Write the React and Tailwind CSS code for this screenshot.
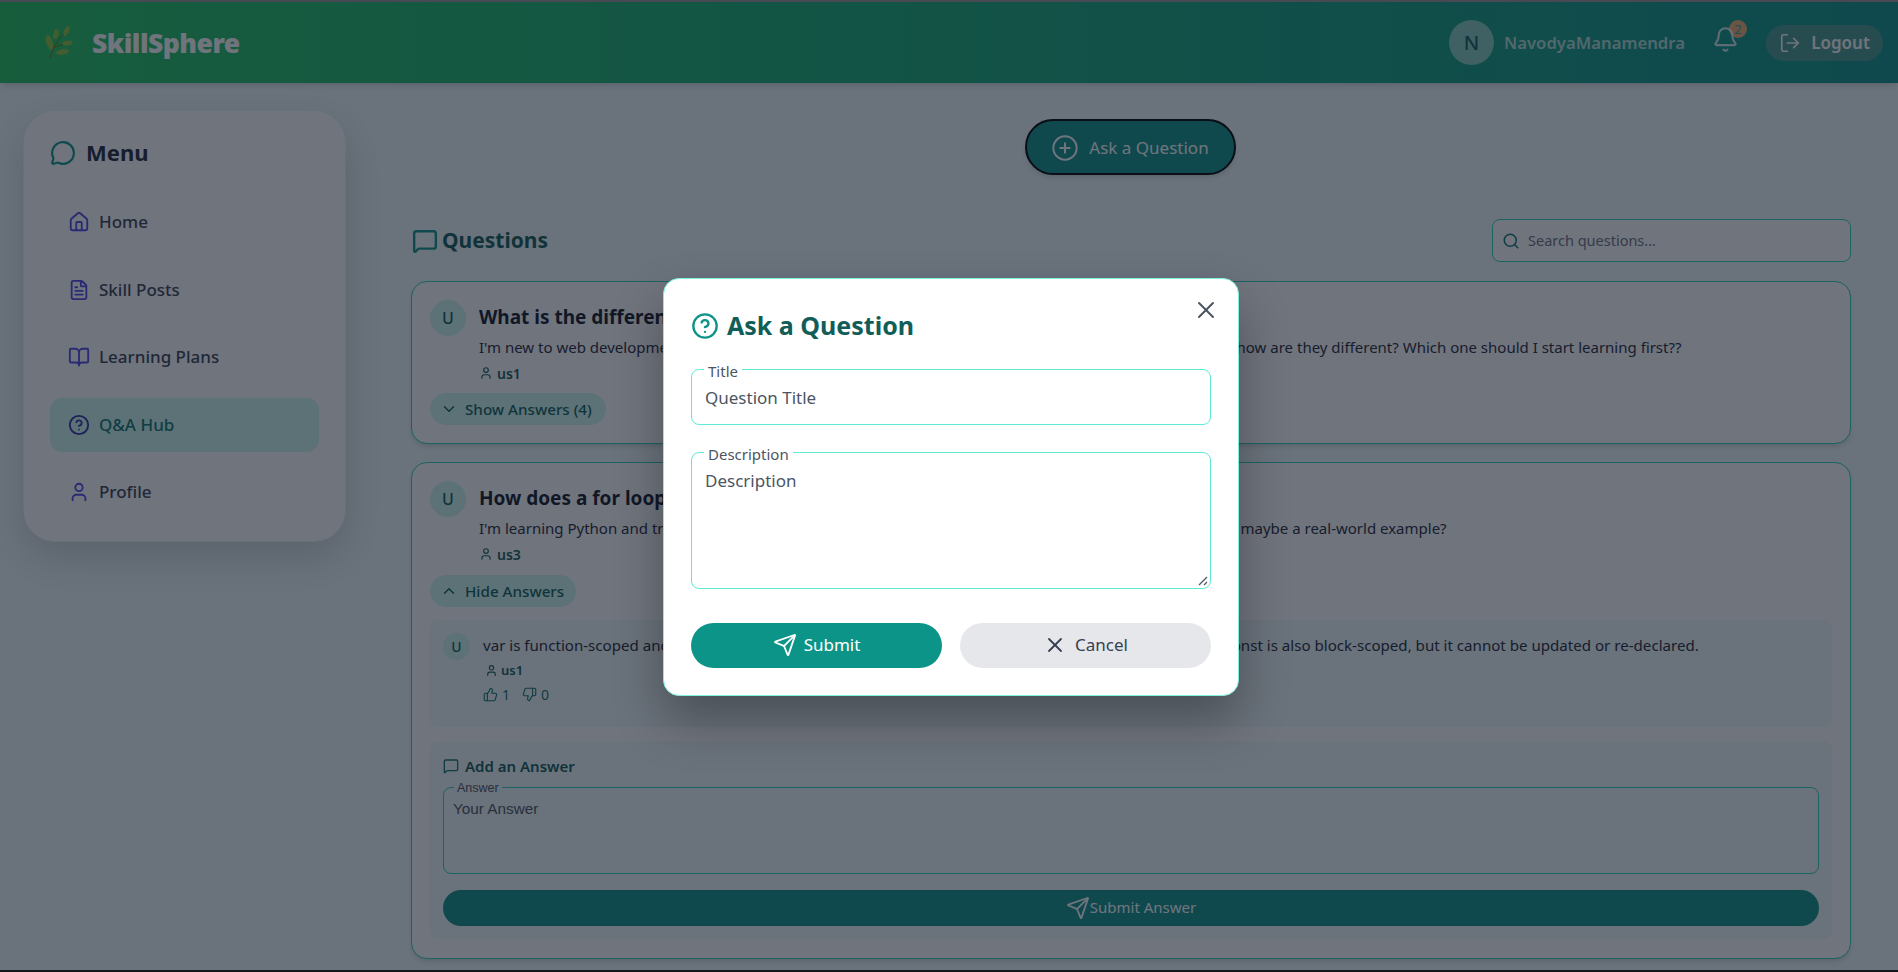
import React from 'react';
import {
  Bell, BookOpen, ChevronDown, ChevronUp, CircleHelp, CirclePlus, FileText, House, LogOut,
  MessageCircle, MessageSquare, Search, Send, ThumbsDown, ThumbsUp, User, X,
} from 'lucide-react';

const menuItems = [
  { label: 'Home', icon: House },
  { label: 'Skill Posts', icon: FileText },
  { label: 'Learning Plans', icon: BookOpen },
  { label: 'Q&A Hub', icon: CircleHelp, active: true },
  { label: 'Profile', icon: User },
];

const LeafLogo = () => (
  <svg width="28" height="33" viewBox="0 0 28 33" fill="none">
    <path d="M5 32 C7 24 12 14 22 4" stroke="#7c6f00" strokeWidth="1" />
    <path d="M9 21 C15 20 20 18 22 14" stroke="#7c6f00" strokeWidth="0.8" />
    <ellipse cx="4.5" cy="16.5" rx="3.2" ry="7.5" transform="rotate(-18 4.5 16.5)" fill="#8cc63f" />
    <ellipse cx="11" cy="8" rx="2.6" ry="5" transform="rotate(12 11 8)" fill="#8cc63f" />
    <ellipse cx="21.5" cy="5" rx="2.4" ry="5.4" transform="rotate(24 21.5 5)" fill="#8cc63f" />
    <ellipse cx="22.5" cy="17" rx="5.2" ry="2.4" transform="rotate(-8 22.5 17)" fill="#8cc63f" />
    <ellipse cx="17.5" cy="26" rx="6.5" ry="2.8" transform="rotate(-10 17.5 26)" fill="#8cc63f" />
  </svg>
);

const Header = () => (
  <header className="flex h-[81px] shrink-0 items-center justify-between bg-gradient-to-r from-[#22c55e] to-[#0d9488] pl-[45px] pr-[15px] shadow-md">
    <div className="flex items-center gap-[19px]">
      <LeafLogo />
      <span className="pt-[2px] text-[26.5px] font-black tracking-[-0.5px] text-white">SkillSphere</span>
    </div>
    <div className="flex items-center">
      <div className="flex h-[45px] w-[45px] items-center justify-center rounded-full bg-white/50 text-[20px] font-medium text-[#115e59]">N</div>
      <span className="ml-[10px] text-[16.7px] font-semibold text-white/70">NavodyaManamendra</span>
      <div className="relative mb-[6px] ml-[27px] mr-[27px]">
        <span className="absolute -right-[8px] -top-[6px] flex h-[18px] w-[18px] items-center justify-center rounded-full bg-[#f0b173] text-[13px] leading-none text-[#4f9aa0]">2</span>
        <Bell size={27} strokeWidth={1.8} className="relative text-white/80" />
      </div>
      <button className="flex h-[36px] w-[117px] items-center justify-center gap-[10px] rounded-full bg-[#4a9c90] text-[17px] font-semibold text-white">
        <LogOut size={22} strokeWidth={1.8} />
        Logout
      </button>
    </div>
  </header>
);

const Sidebar = () => (
  <aside className="h-[432px] w-[323px] shrink-0 rounded-[32px] border border-[#e6f7f5] bg-white px-[26px] pt-[25px] shadow-[0_16px_40px_rgba(0,0,0,0.16)]">
    <div className="flex items-center gap-[10px]">
      <MessageCircle size={26} strokeWidth={2} className="text-[#0d9488]" />
      <span className="text-[22px] font-bold text-[#1f2937]">Menu</span>
    </div>
    <nav className="mt-[26px] flex flex-col gap-[13.5px]">
      {menuItems.map((item) => {
        const Icon = item.icon;
        return (
          <div
            key={item.label}
            className={`flex h-[54px] items-center gap-[9px] rounded-xl pl-[18px] text-[17px] font-medium ${item.active ? 'bg-[#ccfbf1] text-[#0f766e]' : 'text-[#374151]'}`}
          >
            <Icon size={22} strokeWidth={2} className={item.active ? 'text-[#3730a3]' : 'text-[#4f46e5]'} />
            {item.label}
          </div>
        );
      })}
    </nav>
  </aside>
);

const Avatar = ({ small }) => (
  <div className={`flex shrink-0 items-center justify-center rounded-full bg-[#ccfbf1] font-medium text-[#115e59] ${small ? 'h-[27px] w-[27px] text-[14px]' : 'h-[36px] w-[36px] text-[16px]'}`}>U</div>
);

const Author = ({ name, small }) => (
  <div className={`flex items-center font-semibold text-[#115e59] ${small ? 'gap-[3px] text-[13px]' : 'gap-[4px] text-[14px]'}`}>
    <User size={small ? 13 : 14} strokeWidth={2} />
    {name}
  </div>
);

const Pill = ({ width, icon: Icon, children }) => (
  <div className={`flex h-[32px] items-center gap-[7px] rounded-full bg-[#ccfbf1] pl-[10px] text-[15.2px] font-medium text-[#115e59] ${width}`}>
    <Icon size={18} strokeWidth={2} />
    {children}
  </div>
);

const QuestionHead = ({ title, body, author }) => (
  <div className="flex gap-[13px]">
    <Avatar />
    <div className="min-w-0 flex-1">
      <div className="flex h-[35px] items-center text-[19px] font-bold text-[#111827]">{title}</div>
      <div className="h-[24px] whitespace-nowrap text-[15px] leading-[24px] text-[#1f2937]">{body}</div>
      <div className="mt-[4px] flex h-[20px] items-center"><Author name={author} /></div>
    </div>
  </div>
);

const Main = () => (
  <main className="min-w-0 flex-1">
    <div className="flex justify-center pr-[2px] pt-[9px]">
      <button className="flex h-[56px] w-[211px] items-center justify-center gap-[10px] rounded-full border-2 border-black bg-[#0d9488] pt-[1px] text-[17px] text-white shadow-md">
        <CirclePlus size={28} strokeWidth={1.7} />
        Ask a Question
      </button>
    </div>
    <div className="mt-[44px] flex items-center justify-between">
      <div className="flex items-center gap-[4px] pl-[1px] text-[21px] font-bold text-[#115e59]">
        <MessageSquare size={26} strokeWidth={2.2} className="text-[#0d9488]" />
        Questions
      </div>
      <div className="flex h-[43px] w-[359px] items-center gap-[8px] rounded-lg border border-[#2dd4bf] bg-white pl-[9px] text-[14.5px] text-[#6b7280]">
        <Search size={18} strokeWidth={2} className="text-[#0f766e]" />
        Search questions...
      </div>
    </div>
    <div className="mt-[19px] flex flex-col gap-[18px]">
      <section className="h-[163px] rounded-2xl border border-[#2dd4bf] bg-white px-[18px] pt-[18px] shadow-md">
        <QuestionHead
          title="What is the difference between React, Angular, and Vue?"
          body="I'm new to web development and keep hearing about React, Angular, and Vue.js. What exactly are they, and how are they different? Which one should I start learning first??"
          author="us1"
        />
        <div className="mt-[10px]"><Pill width="w-[176px]" icon={ChevronDown}>Show Answers (4)</Pill></div>
      </section>
      <section className="h-[497px] rounded-2xl border border-[#2dd4bf] bg-white px-[18px] pt-[18px] shadow-md">
        <QuestionHead
          title="How does a for loop work in Python?"
          body="I'm learning Python and trying to understand how a for loop works. Can someone explain it with syntax and maybe a real-world example?"
          author="us3"
        />
        <div className="mt-[11px]"><Pill width="w-[146px]" icon={ChevronUp}>Hide Answers</Pill></div>
        <div className="mt-[13px] flex h-[107px] gap-[13px] rounded-lg bg-[#f0f9f9] pl-[13px] pt-[13px]">
          <Avatar small />
          <div>
            <div className="whitespace-nowrap text-[15.1px] leading-[24px] text-[#1f2937]">var is function-scoped and can be re-declared and updated, let is block-scoped and can only be updated, const is also block-scoped, but it cannot be updated or re-declared.</div>
            <div className="mt-[4px] pl-[2px]"><Author name="us1" small /></div>
            <div className="mt-[3px] flex items-center gap-[12px] text-[14px] text-[#0f766e]">
              <span className="flex items-center gap-[4px]"><ThumbsUp size={15} strokeWidth={1.8} />1</span>
              <span className="flex items-center gap-[4px]"><ThumbsDown size={15} strokeWidth={1.8} />0</span>
            </div>
          </div>
        </div>
        <div className="mt-[15px] h-[197px] rounded-lg bg-[#f0f9f9] px-[13px] pt-[13px]">
          <div className="flex items-center gap-[6px] text-[15px] font-semibold text-[#115e59]">
            <MessageSquare size={16} strokeWidth={2} className="text-[#0f766e]" />
            Add an Answer
          </div>
          <div className="relative mt-[9px] h-[87px] rounded-lg border border-[#2dd4bf] px-[9px] pt-[10px] text-[15.3px] font-['Liberation_Sans',sans-serif] text-[#4b5563]">
            <span className="absolute -top-[8px] left-[10px] bg-[#f0f9f9] px-[3px] text-[12.5px] leading-[16px]">Answer</span>
            Your Answer
          </div>
          <button className="mt-[16px] flex h-[36px] w-full items-center justify-center rounded-full bg-[#0d9488] text-[15px] text-white">
            <Send size={24} strokeWidth={1.8} />
            Submit Answer
          </button>
        </div>
      </section>
    </div>
  </main>
);

const Field = ({ label, placeholder, area }) => (
  <div className={`relative rounded-lg border border-[#5eead4] px-[13px] text-[17px] text-[#4b5563] ${area ? 'h-[137px] pt-[15px]' : 'flex h-[56px] items-center pt-[2px]'}`}>
    <span className="absolute -top-[9px] left-[12px] bg-white px-[4px] text-[15px] leading-[20px]">{label}</span>
    {placeholder}
    {area && (
      <svg className="absolute bottom-[2px] right-[2px]" width="10" height="10" viewBox="0 0 10 10" stroke="#4b5563" strokeWidth="1.2">
        <path d="M1 9 L9 1 M6 9 L9 6" />
      </svg>
    )}
  </div>
);

const AskModal = () => (
  <div className="absolute inset-0 z-10 flex items-center justify-center bg-[#111827]/60 pl-[4px] pt-[2px]">
    <div className="relative h-[418px] w-[576px] rounded-2xl border-[1.5px] border-[#7ef0dc] bg-white px-[27px] pt-[28px] shadow-[0_25px_50px_rgba(0,0,0,0.3)]">
      <button className="absolute right-[18px] top-[17px] text-[#4b5563]"><X size={28} strokeWidth={1.7} /></button>
      <div className="flex items-center gap-[8px] text-[25px] font-bold text-[#115e59]">
        <CircleHelp size={28} strokeWidth={2} className="text-[#0d9488]" />
        Ask a Question
      </div>
      <div className="mt-[24px] flex flex-col gap-[27px]">
        <Field label="Title" placeholder="Question Title" />
        <Field label="Description" placeholder="Description" area />
      </div>
      <div className="mt-[34px] flex gap-[18px]">
        <button className="flex h-[45px] flex-1 items-center justify-center gap-[7px] rounded-full bg-[#0d9488] text-[17px] text-white">
          <Send size={24} strokeWidth={1.8} />
          Submit
        </button>
        <button className="flex h-[45px] flex-1 items-center justify-center gap-[8px] rounded-full bg-[#e5e7eb] text-[17px] text-[#374151]">
          <X size={24} strokeWidth={1.8} />
          Cancel
        </button>
      </div>
    </div>
  </div>
);

export default function App() {
  return (
    <div className="relative flex h-[972px] flex-col overflow-hidden bg-[#f0fafa] font-['Noto_Sans',sans-serif]">
      <div className="relative z-20 h-[2px] shrink-0 bg-[#474a52]" />
      <Header />
      <div className="flex min-h-0 flex-1 gap-[65px] pl-[23px] pr-[47px] pt-[27px]">
        <Sidebar />
        <Main />
      </div>
      <div className="relative z-20 h-[2px] shrink-0 bg-[#14171c]" />
      <AskModal />
    </div>
  );
}
